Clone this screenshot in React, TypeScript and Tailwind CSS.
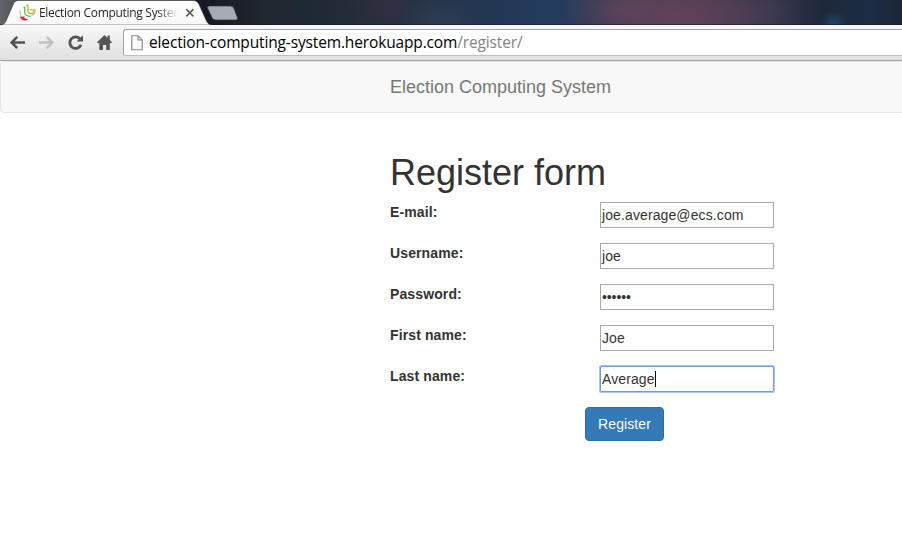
import React from "react";

const backdrop =
  "bg-[radial-gradient(ellipse_80px_38px_at_680px_18px,#6b4456aa,transparent),radial-gradient(ellipse_60px_34px_at_625px_10px,#6d485aaa,transparent),radial-gradient(ellipse_60px_30px_at_745px_14px,#523d5299,transparent),radial-gradient(ellipse_14px_12px_at_834px_23px,#1d5274aa,transparent),radial-gradient(ellipse_40px_24px_at_440px_20px,#34425899,transparent),radial-gradient(ellipse_36px_22px_at_385px_6px,#422c4066,transparent),linear-gradient(90deg,#62666b_0px,#4c5056_20px,#2c3036_110px,#161a20_205px,#20262c_260px,#1f2a36_320px,#28303f_390px,#253650_470px,#233c5e_550px,#373a55_610px,#50405a_690px,#34384e_770px,#20283a_820px,#1c2c44_870px,#1c2639_902px)]";

function TabStrip() {
  return (
    <div className={`relative h-[25px] shrink-0 ${backdrop}`}>
      <svg className="absolute left-0 top-0" width="902" height="25" viewBox="0 0 902 25">
        <defs>
          <linearGradient id="tab" x1="0" y1="0" x2="0" y2="1">
            <stop offset="0" stopColor="#ffffff" />
            <stop offset="1" stopColor="#f8f8f8" />
          </linearGradient>
        </defs>
        <path d="M0 24.5H902" stroke="#111820" strokeOpacity=".55" />
        <path d="M0 25C3.5 25 5 23.5 6.5 20L13.2 4.5C14.5 1.5 15.8 .5 19 .5H193C196 .5 197.6 1.5 199 4.5L206 20C207.5 23.5 209 25 212 25Z" fill="url(#tab)" stroke="#30353a" strokeOpacity=".55" />
        <path d="M209.5 6H230.5Q233 6 234 8.5L237.4 17.5Q238.2 20 235.8 20H216Q213.2 20 212 17.5L207.7 8.5Q206.7 6 209.5 6Z" fill="#a7abb3" stroke="#30343b" strokeWidth=".7" />
        <g fill="none" strokeLinecap="butt">
          <path d="M26 5.5H28V11.5Q28 13.6 31 13.6Q33.8 13.4 33.8 11.4V9.9H29.8" stroke="#c9b92f" strokeWidth="1.4" />
          <path d="M35 8.8V12.5Q35 14.8 31.5 15.4" stroke="#9c9c8c" strokeWidth=".8" />
          <path d="M23.5 7.4H24.7V12.5Q24.9 16.2 30.6 16.4" stroke="#45bd55" strokeWidth="1.2" />
          <path d="M20 10.5Q19.4 14.5 21.6 16.8" stroke="#b4b4b4" strokeWidth="1" />
        </g>
        <path d="M19.8 16.8L24.8 16.5L24 17.8Q25.4 19 28.4 19.8C24.1 21.4 21 20 19.8 16.8Z" fill="#df2632" />
        <path d="M186.3 9.2L193.4 16.3M193.4 9.2L186.3 16.3" stroke="#616161" strokeWidth="1.7" />
      </svg>
      <div className="relative ml-[39px] h-[25px] w-[150px] whitespace-nowrap bg-[linear-gradient(90deg,#222_118px,transparent_139px)] bg-clip-text pt-px font-['Open_Sans',sans-serif] text-[12px] leading-[24px] tracking-[-0.3px] text-transparent">
        Election Computing System
      </div>
    </div>
  );
}

function Toolbar() {
  return (
    <div className="flex h-[36px] shrink-0 border-b border-[#a2a2a2] bg-gradient-to-b from-[#f8f8f8] to-[#e0e0e0]">
      <svg className="shrink-0" width="123" height="35" viewBox="0 25 123 35">
        <g fill="none" strokeWidth="2.5">
          <path d="M25 42.5H12M17.2 36.9L11.6 42.5L17.2 48.1" stroke="#505050" />
          <path d="M39 42.5H52M46.8 36.9L52.4 42.5L46.8 48.1" stroke="#c2c2c2" />
          <path d="M80 38.8A5.8 5.8 0 1 0 81 44.8" stroke="#555" strokeWidth="2.8" />
        </g>
        <path d="M83 35.3V41.6H76.6Z" fill="#555" />
        <path d="M104.5 35L97 42.2L98.3 43.4L99.3 42.5V50H103V45H106.2V50H109.8V42.5L110.8 43.4L112 42.2L109.8 40.1V35.6H107.5V37.9Z" fill="#555" />
      </svg>
      <div className="mt-1 flex h-[27px] flex-1 rounded-l-[3px] border border-r-0 border-[#a2a2a2] border-b-[#c0c0c0] bg-white">
        <svg className="ml-[7px] mt-[5px] shrink-0" width="12" height="16" viewBox="0 0 12 16">
          <path d="M.75 .75H7L11.25 5V14.75H.75Z" fill="#fafafa" stroke="#8b8b8b" strokeWidth="1.2" />
          <path d="M7 .75V5H11.25" fill="none" stroke="#8b8b8b" strokeWidth="1.1" />
        </svg>
        <span className="ml-[6px] whitespace-nowrap font-['Open_Sans',sans-serif] text-[15.5px] leading-[25px] tracking-[-0.145px] text-black">
          election-computing-system.herokuapp.com<span className="text-[#858585]">/register/</span>
        </span>
      </div>
    </div>
  );
}

const fields = [
  { label: "E-mail:", value: "joe.average@ecs.com" },
  { label: "Username:", value: "joe" },
  { label: "Password:", value: "••••••", password: true },
  { label: "First name:", value: "Joe" },
  { label: "Last name:", value: "Average", focused: true },
];

export default function App() {
  return (
    <div className="flex h-[558px] w-[902px] flex-col overflow-hidden bg-white font-['Liberation_Sans',Arial,sans-serif] text-[14px] leading-[20px] text-[#333]">
      <TabStrip />
      <Toolbar />
      <nav className="h-[52px] shrink-0 rounded-l-[4px] border border-r-0 border-[#e7e7e7] bg-[#f8f8f8] pl-[389px] pt-[15px] text-[18px] text-[#777]">
        Election Computing System
      </nav>
      <main className="pl-[390px] pt-[40px]">
        <h1 className="mb-[9px] h-[40px] whitespace-nowrap text-[36px] font-normal leading-[40px]">Register form</h1>
        {fields.map((f) => (
          <div key={f.label} className="mb-[15px] flex h-[26px]">
            <label className="w-[210px] font-bold tracking-[0.12px]">{f.label}</label>
            <div
              className={`flex h-[26px] w-[174px] items-center whitespace-nowrap border pl-px ${
                f.focused ? "rounded-[1px] border-[#7398dc] shadow-[0_0_0_1px_#a8c7f7]" : "border-[#a9a9a9]"
              }`}
            >
              <span className={f.password ? "tracking-[-0.1px]" : "tracking-[0.11px]"}>{f.value}</span>
              {f.focused && <span className="h-4 w-px bg-black" />}
            </div>
          </div>
        ))}
        <button className="ml-[195px] h-[34px] w-[79px] rounded-[4px] border border-[#2e6da4] bg-[#337ab7] text-white tracking-[0.1px]">Register</button>
      </main>
    </div>
  );
}
